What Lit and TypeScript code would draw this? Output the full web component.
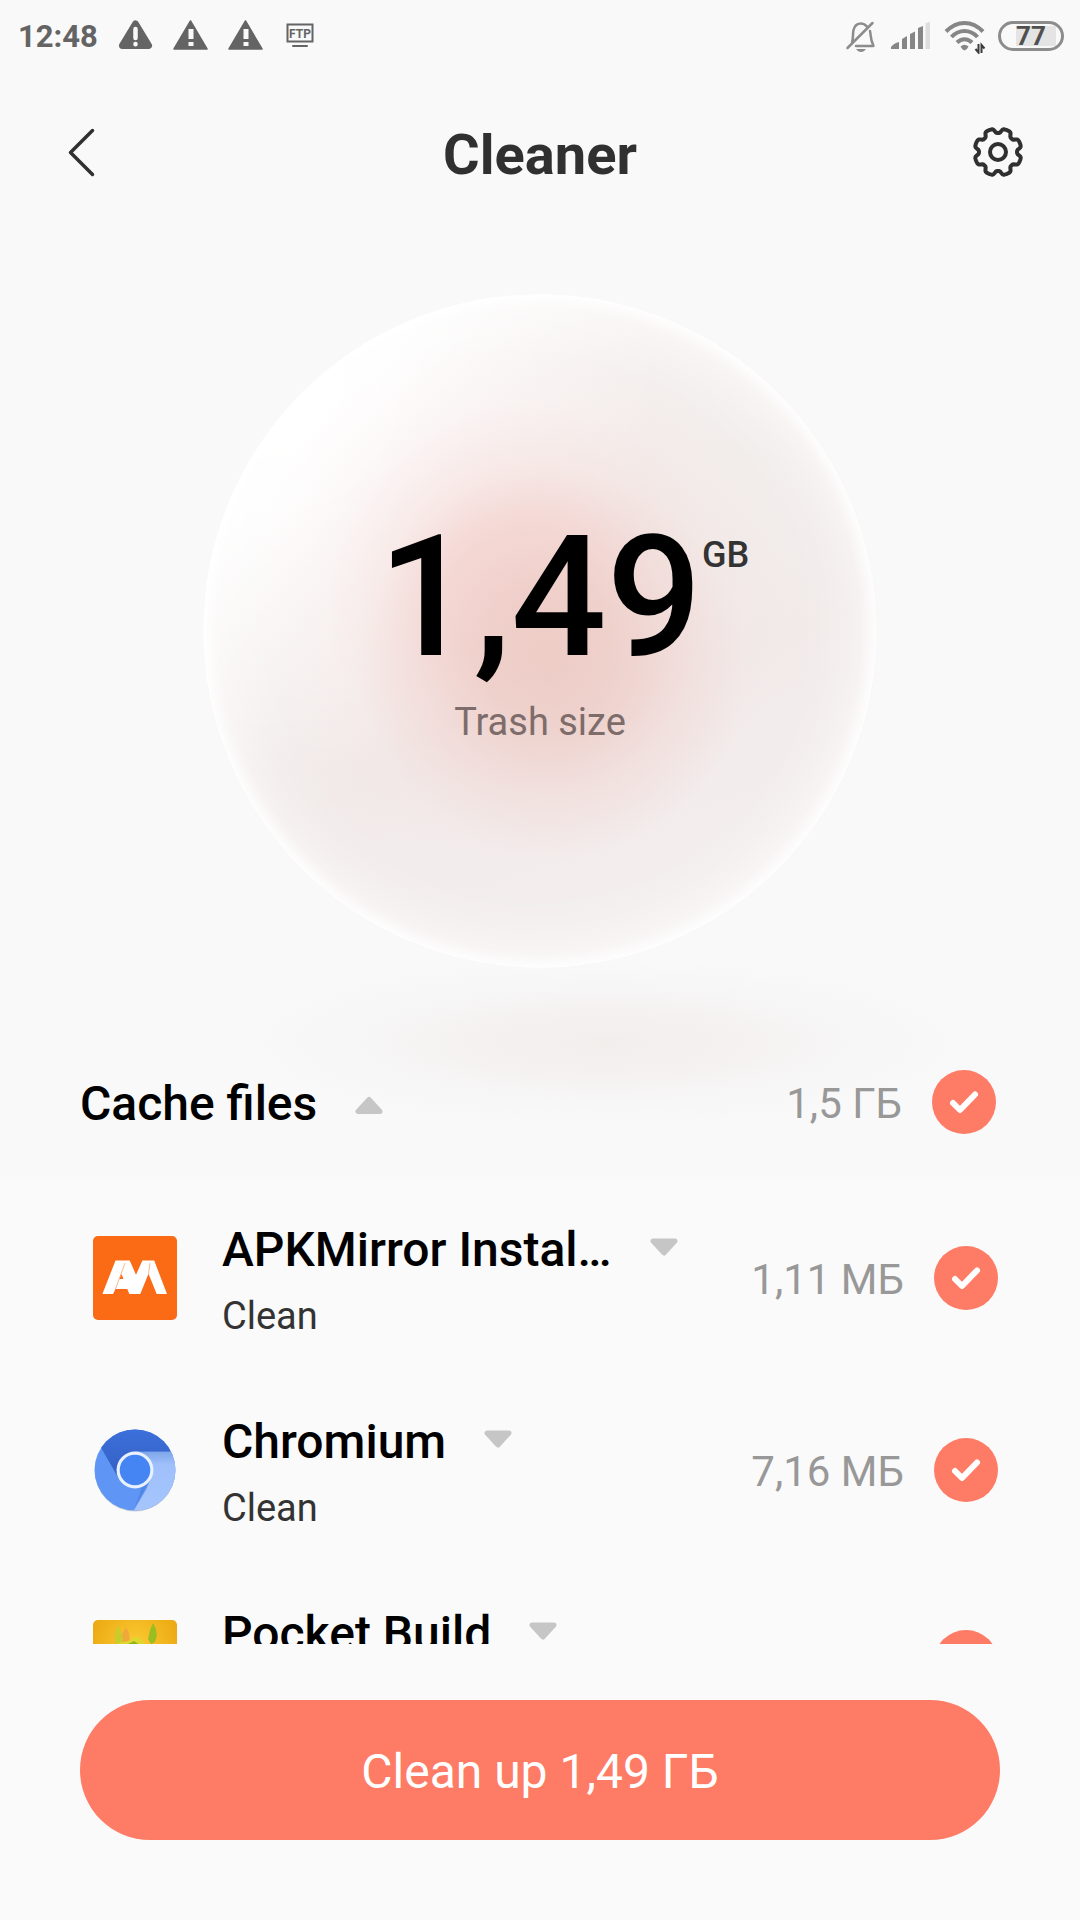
import { LitElement, html, css, svg, nothing } from "lit";
import { customElement, property, state } from "lit/decorators.js";

type AppIcon = "apkmirror" | "chromium" | "pocket";

interface CacheEntry {
  id: AppIcon;
  name: string;
  action: string;
  size: string;
  checked: boolean;
}

/** Outline of the settings cog: a circle whose radius dips eight times. */
function cogPath(cx: number, cy: number): string {
  const points: string[] = [];
  for (let i = 0; i < 160; i++) {
    const a = (i / 160) * Math.PI * 2;
    const wave = Math.cos(8 * a);
    const r = 21.2 - 2.4 * Math.tanh(2.2 * wave - 0.7);
    points.push(`${(cx + r * Math.sin(a)).toFixed(2)} ${(cy - r * Math.cos(a)).toFixed(2)}`);
  }
  return `M${points.join("L")}Z`;
}

const appIcons = {
  apkmirror: svg`
    <rect width="84" height="84" rx="5" fill="#fb6a14" />
    <path fill="#fff" d="M9.400 58L22.500 24.500H36.700L43 38.700L49.400 24.500H61.200L74 58H63.700L55.500 37.700L47.300 58H36.300L34.300 53H22.500L20 58Z" />
    <path fill="#fb6a14" d="M28.500 38L30.500 43H26.500Z" />
    <path fill="none" stroke="#fb6a14" stroke-width=".7" opacity=".7" d="M32 27L22.500 53M57 27L55.500 37.700" />`,
  chromium: svg`
    <defs>
      <clipPath id="disc"><circle cx="42" cy="42" r="40.500" /></clipPath>
      <linearGradient id="lightWedge" x1="0" y1="0" x2="0" y2="1">
        <stop offset="0" stop-color="#7ea6e8" /><stop offset=".22" stop-color="#9fc0fb" /><stop offset="1" stop-color="#a6c5fd" />
      </linearGradient>
      <linearGradient id="topWedge" x1="0" y1="0" x2="0" y2="1">
        <stop offset="0" stop-color="#3c70db" /><stop offset="1" stop-color="#345fc2" />
      </linearGradient>
    </defs>
    <circle cx="42" cy="43.500" r="40" fill="#c9cdd4" />
    <g clip-path="url(#disc)">
      <rect width="84" height="84" fill="#5f96f5" />
      <path fill="url(#lightWedge)" d="M42 23.500H84V84H39.500L58 51Z" />
      <path fill="url(#topWedge)" d="M0 0H84V23.500H42L26 51L8.500 20.500Z" />
      <path fill="#3f78dc" opacity=".5" d="M57 52L53 62L40 84L46 68L49 57Z" />
    </g>
    <circle cx="42" cy="42" r="18.500" fill="#e9f1fe" />
    <circle cx="42" cy="42" r="15.300" fill="#4485f3" />`,
  pocket: svg`
    <defs>
      <radialGradient id="glow" cx=".5" cy=".3" r=".6">
        <stop offset="0" stop-color="#fbcb35" /><stop offset="1" stop-color="#eba60e" />
      </radialGradient>
    </defs>
    <rect width="84" height="84" rx="5" fill="url(#glow)" />
    <path fill="#efa93a" d="M33 7L36 13L37 22L34 26H30L29 14Z" />
    <path fill="#c9cc2c" d="M25 5L28 12L30 20L29 28H22L22 14Z" />
    <path fill="#9cbd22" d="M60 3L63 9L64 16L62 22L58 24L55 19L57 10Z" />
    <path fill="#dfd72d" d="M22 25C28 21 34 23 38 19C44 15 49 18 51 23L57 25L62 32H20Z" />
    <path fill="#93b321" d="M35 24L41 21L47 25L44 28H37Z" />
    <rect y="32" width="84" height="52" fill="#8fb51f" />`,
};

@customElement("check-circle")
export class CheckCircle extends LitElement {
  @property() label = "";
  @property({ type: Boolean }) checked = false;

  static styles = css`
    :host {
      display: block;
      width: 64px;
      height: 64px;
    }
    .box {
      display: grid;
    }
    .input,
    .tick {
      grid-area: 1 / 1;
      width: 64px;
      height: 64px;
      margin: 0;
    }
    .input {
      appearance: none;
      border-radius: 50%;
      background: #dddddd;
      cursor: pointer;
    }
    .input:checked {
      background: #fe7b66;
    }
    .tick {
      pointer-events: none;
    }
  `;

  render() {
    return html`
      <label class="box">
        <input class="input" type="checkbox" aria-label=${this.label} .checked=${this.checked} />
        <svg class="tick" viewBox="0 0 64 64" aria-hidden="true">
          <path d="M21 33L28 40L43 24.500" fill="none" stroke="#fff" stroke-width="6" stroke-linecap="round" stroke-linejoin="round" />
        </svg>
      </label>
    `;
  }
}

@customElement("expand-arrow")
export class ExpandArrow extends LitElement {
  @property() label = "";
  @property({ type: Boolean }) open = false;

  static styles = css`
    :host {
      display: block;
    }
    .arrow {
      display: block;
      padding: 0;
      border: 0;
      background: none;
      cursor: pointer;
    }
    .shape {
      display: block;
      width: 28px;
      height: 24px;
    }
  `;

  render() {
    const d = this.open ? "M3 19.500H25L14 7.500Z" : "M3 3H25L14 15Z";
    return html`
      <button class="arrow" type="button" aria-label=${this.label} aria-expanded=${this.open ? "true" : "false"}>
        <svg class="shape" viewBox="0 0 28 24" aria-hidden="true">
          <path d=${d} fill="#c6c6c6" stroke="#c6c6c6" stroke-width="5" stroke-linejoin="round" />
        </svg>
      </button>
    `;
  }
}

@customElement("status-bar")
export class StatusBar extends LitElement {
  static styles = css`
    :host {
      display: flex;
      align-items: center;
      justify-content: space-between;
      height: 72px;
      padding: 0 16px 0 18px;
      color: #646464;
    }
    .group {
      display: flex;
      align-items: center;
    }
    .left {
      gap: 20px;
    }
    .right {
      gap: 12px;
    }
    .clock {
      padding-top: 2px;
      font-size: 31px;
      font-weight: 700;
      line-height: 40px;
    }
    .glyph {
      display: block;
      width: 35px;
      height: 36px;
    }
    .wide {
      width: 42px;
    }
    .battery {
      display: grid;
      place-items: center;
      box-sizing: border-box;
      width: 66px;
      height: 30px;
      border: 3px solid #8c8c8c;
      border-radius: 15px;
      background: linear-gradient(90deg, transparent 15px, #e4e4e4 15px) no-repeat 0 50% / 55px 20px;
      color: #505050;
      font-size: 26px;
      font-weight: 700;
      line-height: 24px;
    }
  `;

  render() {
    const squareWarning = html`
      <svg class="glyph" viewBox="0 0 35 36" aria-hidden="true">
        <path fill="#646464" stroke="#646464" stroke-width="1.500" stroke-linejoin="round" d="M17.500 3L34 31H1Z" />
        <path fill="#f9f9f9" d="M15.500 11H20.500V21H15.500ZM15.500 24H20.500V28H15.500Z" />
      </svg>
    `;
    return html`
      <div class="group left">
        <span class="clock">12:48</span>
        <svg class="glyph" viewBox="0 0 35 36" aria-hidden="true">
          <path fill="#646464" stroke="#646464" stroke-width="7" stroke-linejoin="round" d="M17.500 6L30.500 27.500H4.500Z" />
          <path stroke="#f9f9f9" stroke-width="4.500" stroke-linecap="round" d="M17.500 11V20M17.500 26V26.300" />
        </svg>
        ${squareWarning}${squareWarning}
        <svg class="glyph" viewBox="0 0 35 36" aria-hidden="true">
          <rect x="4.500" y="6.500" width="25" height="17" fill="none" stroke="#646464" stroke-width="2" />
          <text x="17" y="19.500" text-anchor="middle" font-size="12" font-weight="700" fill="#646464">FTP</text>
          <path stroke="#646464" stroke-width="2" stroke-linecap="round" d="M10 28H24" />
        </svg>
      </div>
      <div class="group right">
        <svg class="glyph" viewBox="0 0 35 36" aria-hidden="true">
          <path fill="none" stroke="#8c8c8c" stroke-width="2.500" stroke-linecap="round" stroke-linejoin="round"
            d="M9 24C10.500 21 9.500 16 10.500 12C11.500 8 14 5.500 18 5.500C20.500 5.500 22 6.500 23.500 8M27 13C28 17 27 21 30.500 28H13M4.500 30L29.500 5" />
          <path fill="#8c8c8c" d="M13 31H23C21.500 33 20 34 18 34C16 34 14.500 33 13 31Z" />
        </svg>
        <svg class="glyph wide" viewBox="0 0 42 36" aria-hidden="true">
          <path fill="#868686" d="M1 31V29Q4 25 9 24V31ZM12 31V21L17 18V31ZM20 31V16L25 13.500V31ZM28 31V10L33 8V31Z" />
          <path fill="#dedede" d="M35.500 31V5L40 4V31Z" />
        </svg>
        <svg class="glyph wide" viewBox="0 0 42 36" aria-hidden="true">
          <g fill="none" stroke="#868686" stroke-width="4">
            <path d="M2 13.500C13 2 28 2 39 13.500" />
            <path d="M7.500 19C15 11 26 11 33.500 19" />
            <path d="M13 24.500C17.500 20 23.500 20 28 24.500" />
          </g>
          <path fill="#868686" d="M16.500 28.500Q20.500 25 24.500 28.500Q23 32 20.500 32.500Q18 32 16.500 28.500Z" />
          <path fill="none" stroke="#3c3c3c" stroke-width="2" d="M34.500 26V34.500L31.500 31M37.500 35V27L40.500 30.500" />
        </svg>
        <span class="battery">77</span>
      </div>
    `;
  }
}

@customElement("app-root")
export class AppRoot extends LitElement {
  @state() private entries: CacheEntry[] = [
    { id: "apkmirror", name: "APKMirror Instal…", action: "Clean", size: "1,11 МБ", checked: true },
    { id: "chromium", name: "Chromium", action: "Clean", size: "7,16 МБ", checked: true },
    { id: "pocket", name: "Pocket Build", action: "", size: "", checked: true },
  ];

  static styles = css`
    :host {
      display: block;
      font-family: Roboto, "Liberation Sans", sans-serif;
    }
    .screen {
      display: flex;
      flex-direction: column;
      height: 100vh;
      overflow: hidden;
      background: #fafafa;
    }
    .top {
      flex: none;
      background: #f9f9f9;
    }
    .header {
      display: grid;
      grid-template-columns: 64px 1fr 64px;
      align-items: center;
      height: 164px;
      padding: 0 50px;
    }
    .icon-button {
      width: 64px;
      height: 64px;
      padding: 0;
      border: 0;
      background: none;
      cursor: pointer;
    }
    .icon {
      display: block;
      width: 64px;
      height: 64px;
    }
    .title {
      margin: 0;
      padding-top: 2px;
      color: #303030;
      font-size: 56px;
      font-weight: 700;
      line-height: 64px;
      text-align: center;
    }
    .hero {
      position: relative;
      display: flex;
      justify-content: center;
      padding: 58px 0 60px;
    }
    .shade {
      position: absolute;
      right: 10%;
      bottom: -100px;
      width: 68%;
      height: 170px;
      background: radial-gradient(closest-side, #f2eeec 0%, #f4f1f0 35%, #f7f6f6 65%, #f9f9f900 100%);
    }
    .orb {
      position: relative;
      display: flex;
      flex-direction: column;
      align-items: center;
      gap: 36px;
      box-sizing: border-box;
      width: 674px;
      max-width: 100%;
      aspect-ratio: 1;
      padding-top: 240px;
      border-radius: 50%;
      background:
        radial-gradient(circle at 52% 55%, #eccac3d0 0%, #eccac3a8 12%, #eecbc650 24%, #eecbc600 38%),
        radial-gradient(circle at 47% 45%, #f5d0ccd0 0%, #f5d2ceb8 14%, #f4d8d570 26%, #f4dedc30 38%, #f4e2e000 52%),
        radial-gradient(circle at 10% 14%, #ffffff 0%, #fffffff0 14%, #ffffff90 28%, #ffffff00 46%),
        linear-gradient(160deg, #f8f4f3 0%, #f2edeb 40%, #f1eae9 60%, #f5f1f1 100%);
      box-shadow: inset 0 0 14px 6px #ffffff, inset 0 0 70px 14px #ffffffc0;
    }
    .amount {
      position: relative;
      color: #000000;
      font-size: 168px;
      font-weight: 500;
      line-height: 128px;
    }
    .unit {
      position: absolute;
      top: 0;
      left: 100%;
      color: #333333;
      font-size: 36px;
      line-height: 42px;
    }
    .caption {
      color: #7d6c6a;
      font-size: 38px;
      line-height: 48px;
    }
    .group-row,
    .row {
      display: grid;
      grid-template-columns: 1fr auto 64px;
      align-items: center;
      column-gap: 30px;
    }
    .group-row {
      position: relative;
      height: 148px;
      padding: 0 84px 0 80px;
    }
    .heading {
      display: flex;
      align-items: center;
      gap: 38px;
    }
    .group-row .heading {
      padding-top: 4px;
    }
    .name {
      margin: 0;
      color: #000000;
      font-size: 48px;
      font-weight: 500;
      line-height: 64px;
      white-space: nowrap;
    }
    .size {
      padding-top: 4px;
      color: #989898;
      font-size: 42px;
      line-height: 52px;
    }
    .list {
      flex: 1 1 0;
      min-height: 0;
      margin: 0;
      padding: 6px 0 0;
      overflow: hidden;
      list-style: none;
    }
    .row {
      grid-template-columns: 84px 1fr auto 64px;
      height: 192px;
      padding: 0 82px 0 93px;
    }
    .app-icon {
      display: block;
      width: 84px;
      height: 84px;
    }
    .details {
      display: flex;
      flex-direction: column;
      gap: 10px;
      padding: 2px 0 0 15px;
    }
    .action {
      min-height: 48px;
      color: #333333;
      font-size: 38px;
      line-height: 48px;
    }
    .footer {
      flex: none;
      padding: 56px 80px 80px;
    }
    .clean {
      width: 100%;
      height: 140px;
      padding: 4px 0 0;
      border: 0;
      border-radius: 70px;
      background: #fe7b66;
      color: #ffffff;
      font-family: inherit;
      font-size: 48px;
      line-height: 64px;
      cursor: pointer;
    }
  `;

  private renderEntry(entry: CacheEntry) {
    return html`
      <li class="row">
        <svg class="app-icon" viewBox="0 0 84 84" aria-hidden="true">${appIcons[entry.id]}</svg>
        <div class="details">
          <div class="heading">
            <h3 class="name">${entry.name}</h3>
            <expand-arrow label=${entry.name}></expand-arrow>
          </div>
          <span class="action">${entry.action || nothing}</span>
        </div>
        <span class="size">${entry.size || nothing}</span>
        <check-circle label=${entry.name} .checked=${entry.checked}></check-circle>
      </li>
    `;
  }

  render() {
    return html`
      <main class="screen">
        <div class="top">
          <status-bar></status-bar>
          <header class="header">
            <button class="icon-button" type="button" aria-label="Back">
              <svg class="icon" viewBox="0 0 64 64" aria-hidden="true">
                <path d="M42.500 8.500L20.500 30.500L42.500 52.500" fill="none" stroke="#303030" stroke-width="3.500" stroke-linecap="round" stroke-linejoin="round" />
              </svg>
            </button>
            <h1 class="title">Cleaner</h1>
            <button class="icon-button" type="button" aria-label="Settings">
              <svg class="icon" viewBox="0 0 64 64" aria-hidden="true">
                <g fill="none" stroke="#303030" stroke-width="4" stroke-linejoin="round">
                  <path d=${cogPath(32, 30)} />
                  <circle cx="32" cy="30" r="8" />
                </g>
              </svg>
            </button>
          </header>
          <section class="hero">
            <div class="shade"></div>
            <div class="orb">
              <div class="amount">1,49<span class="unit">GB</span></div>
              <div class="caption">Trash size</div>
            </div>
          </section>
          <div class="group-row">
            <div class="heading">
              <h2 class="name">Cache files</h2>
              <expand-arrow label="Cache files" open></expand-arrow>
            </div>
            <span class="size">1,5 ГБ</span>
            <check-circle label="Cache files" .checked=${true}></check-circle>
          </div>
        </div>
        <ul class="list">
          ${this.entries.map((entry) => this.renderEntry(entry))}
        </ul>
        <footer class="footer">
          <button class="clean" type="button">Clean up 1,49 ГБ</button>
        </footer>
      </main>
    `;
  }
}
